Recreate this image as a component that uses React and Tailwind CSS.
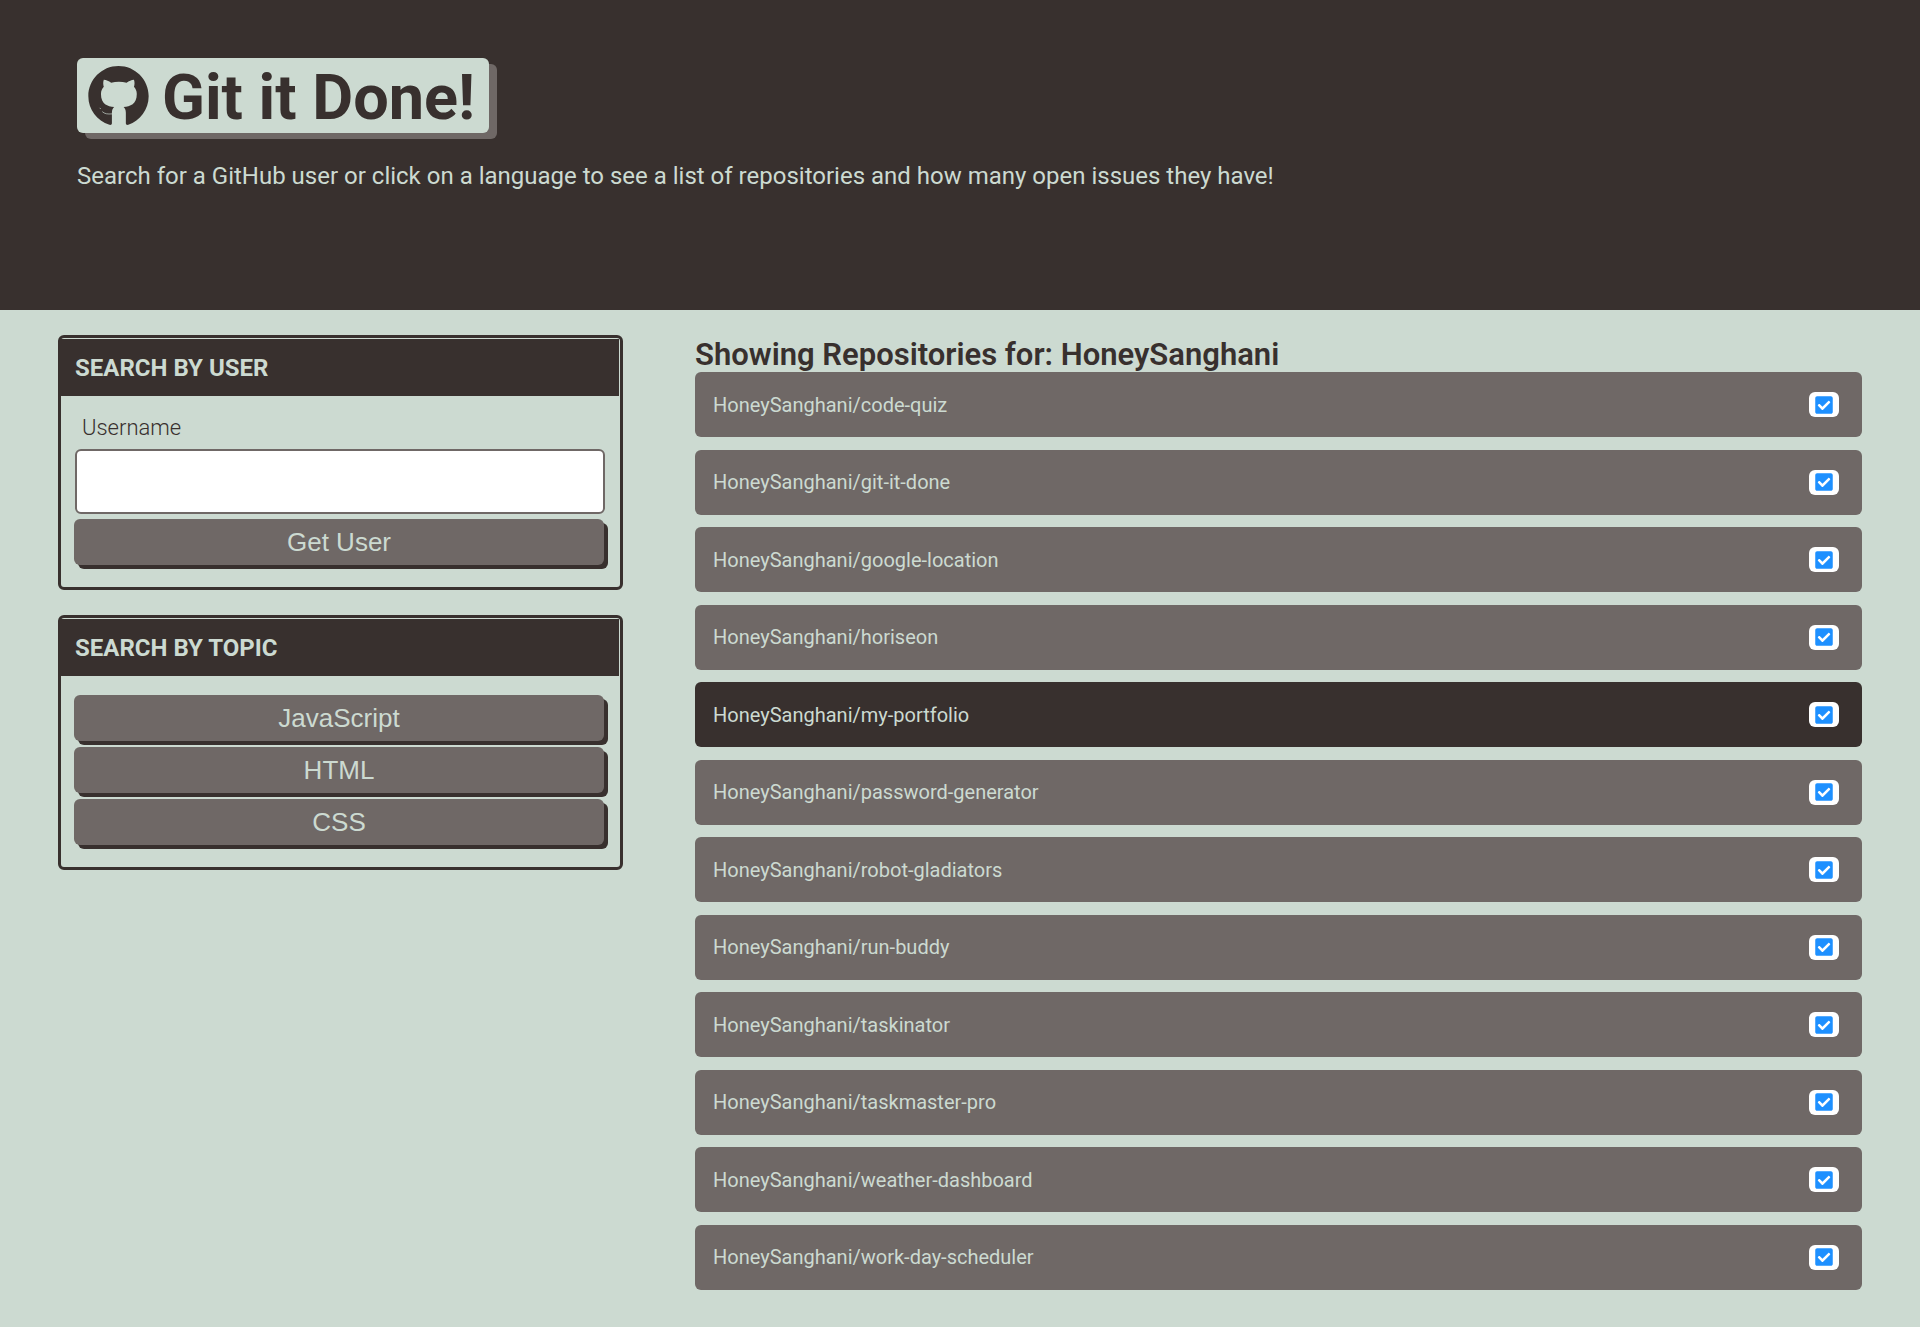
import React from "react";
import { FaCheckSquare } from "react-icons/fa";

const repos = [
  "code-quiz",
  "git-it-done",
  "google-location",
  "horiseon",
  "my-portfolio",
  "password-generator",
  "robot-gladiators",
  "run-buddy",
  "taskinator",
  "taskmaster-pro",
  "weather-dashboard",
  "work-day-scheduler",
];

const topics = ["JavaScript", "HTML", "CSS"];

function GithubMark({ className }) {
  return (
    <svg viewBox="0 0 16 15.65" className={className} fill="currentColor" aria-hidden="true">
      <path d="M8 0C3.58 0 0 3.58 0 8c0 3.54 2.3 6.5 5.6 7.6.4.1.65-.1.65-.4V12.4C6.25 11.7 6.5 11.2 6.85 10.9 5.1 10.7 3.35 10.1 3.35 7.4 3.35 6.6 3.65 6 4.1 5.5 3.95 5.1 3.85 4.4 4.1 3.65 4.8 3.7 5.4 4 6.05 4.42 6.7 4.27 7.4 4.2 8.1 4.2s1.4.07 2.05.22C10.8 4 11.4 3.7 12.1 3.65c.25.75.15 1.45 0 1.85.45.5.75 1.1.75 1.9 0 2.7-1.75 3.3-3.5 3.5.35.3.6.8.6 1.5v2.8c0 .3.25.5.65.4C13.7 14.5 16 11.54 16 8c0-4.42-3.58-8-8-8Z" />
      <path d="M3 11.1l.3.3M3.7 12.1c.6.6 1.4.7 2.6.6" fill="none" stroke="#ccdad1" strokeWidth=".18" />
    </svg>
  );
}

function Card({ title, children }) {
  return (
    <section className="rounded-md border-[3px] border-[#38302e]">
      <h3 className="mt-px mr-px flex h-[57px] items-center bg-[#38302e] px-[14px] text-[24px] font-bold text-[#ccdad1] uppercase">
        {title}
      </h3>
      {children}
    </section>
  );
}

function Btn({ children, type = "button" }) {
  return (
    <button
      type={type}
      className="h-[46px] w-full cursor-pointer rounded-md bg-[#6f6866] pb-px font-['Liberation_Sans',Arial,sans-serif] text-[26px] leading-none text-[#ccdad1] shadow-[4px_4px_0_#38302e]"
    >
      {children}
    </button>
  );
}

export default function App() {
  return (
    <div className="flex min-h-screen flex-col bg-[#ccdad1] font-[Roboto,sans-serif] text-[#38302e]">
      <header className="bg-[#38302e] px-[77px] pt-[58px] pb-[116px]">
        <h1 className="flex h-[75px] w-fit items-center gap-[13px] rounded-md bg-[#ccdad1] pr-[14px] pl-[11px] text-[63px] leading-none font-bold shadow-[8px_6px_0_#6f6866]">
          <GithubMark className="h-[59px] w-[61px]" />
          <span className="pt-1">Git it Done!</span>
        </h1>
        <p className="mt-[26px] text-[24px] leading-[35px] text-[#ccdad1]">
          Search for a GitHub user or click on a language to see a list of repositories and how many open issues they
          have!
        </p>
      </header>

      <main className="grid flex-1 grid-cols-[565fr_1167fr] gap-[72px] px-[58px] pt-[25px] pb-[37px]">
        <div className="flex flex-col gap-[25px]">
          <Card title="Search by User">
            <form className="pt-4 pr-4 pb-[22px] pl-[13px]" onSubmit={(e) => e.preventDefault()}>
              <label htmlFor="username" className="block pl-2 text-[22px] leading-8 font-light">
                Username
              </label>
              <input
                id="username"
                type="text"
                className="mt-[5px] mb-[5px] ml-px block h-[65px] w-full rounded-md border-2 border-[#6f6866] bg-white px-4 text-[22px] outline-none"
              />
              <Btn type="submit">Get User</Btn>
            </form>
          </Card>
          <Card title="Search by Topic">
            <div className="flex flex-col gap-[6px] pt-[19px] pr-4 pb-[22px] pl-[13px]">
              {topics.map((t) => (
                <Btn key={t}>{t}</Btn>
              ))}
            </div>
          </Card>
        </div>

        <div className="flex flex-col">
          <h2 className="pt-[2px] text-[31px] leading-[35px] font-semibold">
            Showing Repositories for: HoneySanghani
          </h2>
          <div className="flex flex-1 flex-col justify-between gap-3">
            {repos.map((r) => (
              <a
                key={r}
                href={"#" + r}
                className={
                  "flex h-[65px] items-center justify-between rounded-md pr-[23px] pl-[18px] text-[20px] text-[#ccdad1] " +
                  (r === "my-portfolio" ? "bg-[#38302e]" : "bg-[#6f6866]")
                }
              >
                <span>HoneySanghani/{r}</span>
                <span className="flex h-[25px] w-[30px] items-center justify-center rounded-md bg-white">
                  <FaCheckSquare className="h-5 w-[18px] text-[#1e90ff]" aria-hidden="true" />
                </span>
              </a>
            ))}
          </div>
        </div>
      </main>
    </div>
  );
}
